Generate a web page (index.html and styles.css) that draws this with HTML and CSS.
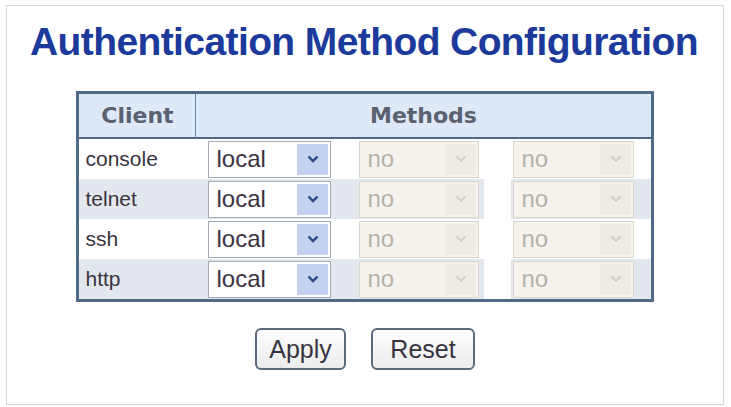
FILE: index.html
```html
<!DOCTYPE html>
<html>
<head>
<meta charset="utf-8">
<link rel="stylesheet" href="styles.css">
</head>
<body>
<div class="panel">
  <h1 class="title">Authentication Method Configuration</h1>
  <table class="auth">
    <colgroup>
      <col class="c-client"><col class="c-m1"><col class="c-m2"><col class="c-gap"><col class="c-m3">
    </colgroup>
    <thead>
      <tr><th class="h-client">Client</th><th class="h-methods" colspan="4">Methods</th></tr>
    </thead>
    <tbody>
      <tr class="r-even">
        <td class="client">console</td>
        <td class="m1"><div class="sel"><span class="val">local</span><span class="arr"><svg viewBox="0 0 12 8" width="12" height="8"><path d="M1.5 1.5 L6 6 L10.5 1.5" fill="none" stroke="currentColor" stroke-width="2.4"/></svg></span></div></td>
        <td class="m2"><div class="sel off"><span class="val">no</span><span class="arr"><svg viewBox="0 0 12 8" width="12" height="8"><path d="M1.5 1.5 L6 6 L10.5 1.5" fill="none" stroke="currentColor" stroke-width="1.6"/></svg></span></div></td>
        <td class="gap"></td>
        <td class="m3"><div class="sel off"><span class="val">no</span><span class="arr"><svg viewBox="0 0 12 8" width="12" height="8"><path d="M1.5 1.5 L6 6 L10.5 1.5" fill="none" stroke="currentColor" stroke-width="1.6"/></svg></span></div></td>
      </tr>
      <tr class="r-odd">
        <td class="client">telnet</td>
        <td class="m1"><div class="sel"><span class="val">local</span><span class="arr"><svg viewBox="0 0 12 8" width="12" height="8"><path d="M1.5 1.5 L6 6 L10.5 1.5" fill="none" stroke="currentColor" stroke-width="2.4"/></svg></span></div></td>
        <td class="m2"><div class="sel off"><span class="val">no</span><span class="arr"><svg viewBox="0 0 12 8" width="12" height="8"><path d="M1.5 1.5 L6 6 L10.5 1.5" fill="none" stroke="currentColor" stroke-width="1.6"/></svg></span></div></td>
        <td class="gap"></td>
        <td class="m3"><div class="sel off"><span class="val">no</span><span class="arr"><svg viewBox="0 0 12 8" width="12" height="8"><path d="M1.5 1.5 L6 6 L10.5 1.5" fill="none" stroke="currentColor" stroke-width="1.6"/></svg></span></div></td>
      </tr>
      <tr class="r-even">
        <td class="client">ssh</td>
        <td class="m1"><div class="sel"><span class="val">local</span><span class="arr"><svg viewBox="0 0 12 8" width="12" height="8"><path d="M1.5 1.5 L6 6 L10.5 1.5" fill="none" stroke="currentColor" stroke-width="2.4"/></svg></span></div></td>
        <td class="m2"><div class="sel off"><span class="val">no</span><span class="arr"><svg viewBox="0 0 12 8" width="12" height="8"><path d="M1.5 1.5 L6 6 L10.5 1.5" fill="none" stroke="currentColor" stroke-width="1.6"/></svg></span></div></td>
        <td class="gap"></td>
        <td class="m3"><div class="sel off"><span class="val">no</span><span class="arr"><svg viewBox="0 0 12 8" width="12" height="8"><path d="M1.5 1.5 L6 6 L10.5 1.5" fill="none" stroke="currentColor" stroke-width="1.6"/></svg></span></div></td>
      </tr>
      <tr class="r-odd">
        <td class="client">http</td>
        <td class="m1"><div class="sel"><span class="val">local</span><span class="arr"><svg viewBox="0 0 12 8" width="12" height="8"><path d="M1.5 1.5 L6 6 L10.5 1.5" fill="none" stroke="currentColor" stroke-width="2.4"/></svg></span></div></td>
        <td class="m2"><div class="sel off"><span class="val">no</span><span class="arr"><svg viewBox="0 0 12 8" width="12" height="8"><path d="M1.5 1.5 L6 6 L10.5 1.5" fill="none" stroke="currentColor" stroke-width="1.6"/></svg></span></div></td>
        <td class="gap"></td>
        <td class="m3"><div class="sel off"><span class="val">no</span><span class="arr"><svg viewBox="0 0 12 8" width="12" height="8"><path d="M1.5 1.5 L6 6 L10.5 1.5" fill="none" stroke="currentColor" stroke-width="1.6"/></svg></span></div></td>
      </tr>
    </tbody>
  </table>
  <div class="buttons">
    <button class="btn btn-apply" type="button">Apply</button>
    <button class="btn btn-reset" type="button">Reset</button>
  </div>
</div>
</body>
</html>
```
FILE: styles.css
```css
html, body {
  margin: 0;
  padding: 0;
  background: #ffffff;
}
body {
  font-family: "Liberation Sans", Arial, sans-serif;
}
.panel {
  margin: 5px 0 0 6px;
  width: 718px;
  height: 400px;
  box-sizing: border-box;
  border: 1px solid #d6d6d6;
  padding-top: 14px;
}
.title {
  margin: 0 0 0 23px;
  font-family: "Liberation Sans", Arial, sans-serif;
  font-weight: bold;
  font-size: 39px;
  line-height: 44px;
  letter-spacing: -0.6px;
  color: #1b3a9b;
  white-space: nowrap;
}
.auth {
  margin: 27px auto 0;
  width: 577px;
  table-layout: fixed;
  border-collapse: separate;
  border-spacing: 0;
  border: 3px solid #4e6a88;
}
.c-client { width: 117px; }
.c-m1 { width: 148px; }
.c-m2 { width: 140px; }
.c-gap { width: 27px; }
.c-m3 { width: 139px; }
.auth th {
  height: 43px;
  padding: 0;
  background: #dde9f8;
  color: #5a6170;
  font-family: "DejaVu Sans", Verdana, sans-serif;
  font-weight: bold;
  font-size: 22px;
  text-align: center;
  border-bottom: 2px solid #4e6a88;
}
.h-client {
  border-right: 1px solid #6f86a2;
}
.auth td {
  height: 40px;
  padding: 0;
  vertical-align: middle;
}
.r-even td { background: #ffffff; }
.r-odd td { background: #e3e8ef; }
.auth td.gap { background: #ffffff; }
.client {
  padding-left: 6px !important;
  font-family: "Liberation Sans", Arial, sans-serif;
  font-size: 21px;
  color: #3a3340;
}
.m1 { padding-left: 12px !important; }
.m2 { padding-left: 15px !important; }
.m3 { padding-left: 2px !important; }
.sel {
  display: flex;
  align-items: stretch;
  justify-content: space-between;
  box-sizing: border-box;
  height: 37px;
  border: 1px solid #a4abb6;
  background: #ffffff;
  padding: 2px;
}
.m1 .sel { width: 123px; }
.m2 .sel { width: 120px; }
.m3 .sel { width: 121px; }
.val {
  padding-left: 5px;
  align-self: center;
  font-family: "Liberation Sans", Arial, sans-serif;
  font-size: 24px;
  color: #3a3340;
}
.arr {
  width: 31px;
  display: flex;
  align-items: center;
  justify-content: center;
  background: #c4d2f0;
  color: #2b4684;
}
.sel.off {
  background: #f5f3eb;
  border-color: #d9d7ce;
}
.sel.off .val { color: #b3b2ab; }
.sel.off .arr {
  background: #edebe3;
  color: #cac9c2;
}
.buttons {
  display: flex;
  justify-content: center;
  gap: 25px;
  margin-top: 26px;
}
.btn {
  box-sizing: border-box;
  height: 42px;
  border: 2px solid #5c6b7c;
  border-radius: 6px;
  background: linear-gradient(#fdfdfd, #ececec);
  font-family: "Liberation Sans", Arial, sans-serif;
  font-size: 25px;
  color: #363340;
  padding: 0;
}
.btn-apply { width: 91px; }
.btn-reset { width: 104px; }
```
